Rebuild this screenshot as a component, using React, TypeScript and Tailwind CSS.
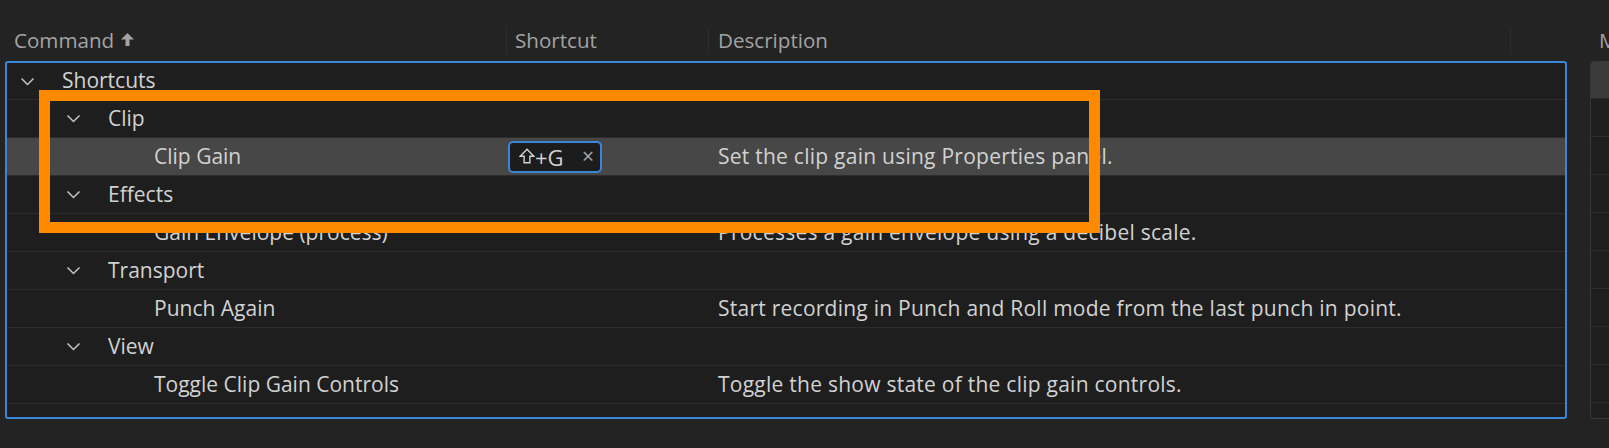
import React from "react";

type Row = { level: number; label: string; group?: boolean; desc?: string; chip?: boolean; active?: boolean };

const rows: Row[] = [
  { level: 0, label: "Shortcuts", group: true },
  { level: 1, label: "Clip", group: true },
  { level: 2, label: "Clip Gain", desc: "Set the clip gain using Properties panel.", chip: true, active: true },
  { level: 1, label: "Effects", group: true },
  { level: 2, label: "Gain Envelope (process)", desc: "Processes a gain envelope using a decibel scale." },
  { level: 1, label: "Transport", group: true },
  { level: 2, label: "Punch Again", desc: "Start recording in Punch and Roll mode from the last punch in point." },
  { level: 1, label: "View", group: true },
  { level: 2, label: "Toggle Clip Gain Controls", desc: "Toggle the show state of the clip gain controls." },
];

function Chevron() {
  return (
    <svg width="15" height="9" viewBox="0 0 15 9" className="shrink-0">
      <path d="M1.5 1.5 L7.5 7.5 L13.5 1.5" fill="none" stroke="#c4c4c4" strokeWidth="1.5" />
    </svg>
  );
}

function SortArrow() {
  return (
    <svg width="13" height="13" viewBox="0 0 13 13" className="ml-[7px] mb-[2px]">
      <path d="M6.5 0 L13 6.5 H8.5 V13 H4.5 V6.5 H0 Z" fill="#a3a3a3" />
    </svg>
  );
}

function ShiftIcon() {
  return (
    <svg width="16" height="16" viewBox="0 0 16 16" className="shrink-0 mb-[1px]">
      <path d="M8 1.2 L14.8 8.3 H10.9 V14.8 H5.1 V8.3 H1.2 Z" fill="none" stroke="#d2d2d2" strokeWidth="1.4" />
    </svg>
  );
}

function Chip() {
  return (
    <div className="ml-[2px] w-[94px] h-[32px] border-2 border-[#3a86d8] rounded-[5px] bg-[#1c1c1c] flex items-center pl-[9px] pr-[6px]">
      <ShiftIcon />
      <span className="text-[22px] text-[#d2d2d2] leading-none">+G</span>
      <span className="ml-auto text-[21px] text-[#a8a8a8] leading-none">×</span>
    </div>
  );
}

export default function App() {
  return (
    <div
      className="relative w-[1609px] h-[448px] bg-[#232323] overflow-hidden flex pl-[5px] pt-[27px]"
      style={{ fontFamily: "'Open Sans', 'Noto Sans', sans-serif" }}
    >
      <div className="w-[1562px] shrink-0 flex flex-col">
        <div className="h-[27px] mb-[7px] flex text-[20.6px] text-[#a3a3a3] leading-none">
          <div className="w-[501px] pl-[9px] flex items-center">
            <span>Command</span>
            <SortArrow />
          </div>
          <div className="w-[202px] border-l border-[#2d2d2d] pl-[8px] flex items-center">Shortcut</div>
          <div className="w-[802px] border-l border-[#2d2d2d] pl-[9px] flex items-center">Description</div>
          <div className="flex-1 border-l border-[#2d2d2d]" />
        </div>
        <div className="h-[358px] border-2 border-[#3a86d8] rounded-[3px] bg-[#1e1e1e] flex flex-col overflow-hidden">
          {rows.map((r, i) => (
            <div
              key={i}
              className={`${i === 0 ? "h-[37px]" : "h-[38px]"} shrink-0 border-b border-[#2c2c2c] flex items-center text-[21px] text-[#d2d2d2] ${r.active ? "bg-[#474747]" : ""}`}
            >
              <div
                className="w-[499px] shrink-0 flex items-center whitespace-nowrap"
                style={{ paddingLeft: r.group ? 13 + r.level * 46 : 55 + r.level * 46 }}
              >
                {r.group && <Chevron />}
                <span className={r.group ? "ml-[27px]" : ""}>{r.label}</span>
              </div>
              <div className="w-[202px] shrink-0 flex items-center">{r.chip && <Chip />}</div>
              <div className="flex-1 pl-[10px] whitespace-nowrap tracking-[0.25px]">{r.desc}</div>
            </div>
          ))}
        </div>
      </div>
      <div className="ml-[23px] w-[60px] shrink-0 flex flex-col">
        <div className="h-[27px] mb-[7px] pl-[9px] flex items-center text-[20.6px] text-[#a3a3a3] leading-none whitespace-nowrap">
          M
        </div>
        <div className="h-[358px] border border-[#383838] rounded-[4px] bg-[#1e1e1e] flex flex-col overflow-hidden">
          <div className="h-[37px] shrink-0 bg-[#3b3b3b] border-b border-[#2c2c2c]" />
          {Array.from({ length: 8 }).map((_, i) => (
            <div key={i} className="h-[38px] shrink-0 border-b border-[#2c2c2c]" />
          ))}
        </div>
      </div>
      <div className="absolute left-[39px] top-[90px] w-[1061px] h-[143px] border-[11px] border-[#ff8a00] pointer-events-none" />
    </div>
  );
}
